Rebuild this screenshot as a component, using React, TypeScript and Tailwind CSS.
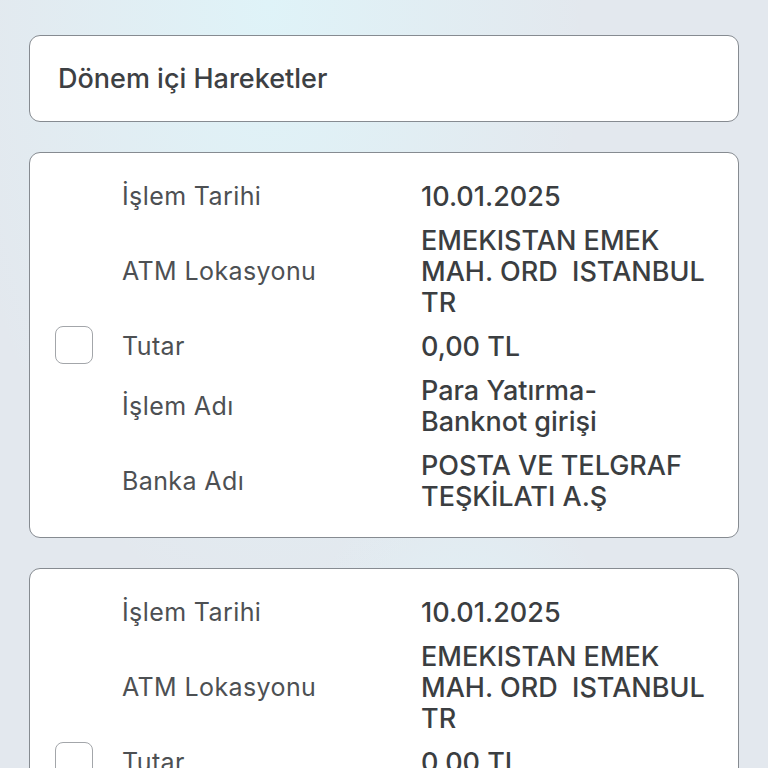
import React from "react";

interface Row {
  label: string;
  value: string[];
}

const rows: Row[] = [
  { label: "İşlem Tarihi", value: ["10.01.2025"] },
  { label: "ATM Lokasyonu", value: ["EMEKISTAN EMEK", "MAH. ORD  ISTANBUL", "TR"] },
  { label: "Tutar", value: ["0,00 TL"] },
  { label: "İşlem Adı", value: ["Para Yatırma-", "Banknot girişi"] },
  { label: "Banka Adı", value: ["POSTA VE TELGRAF", "TEŞKİLATI A.Ş"] },
];

function TxCard() {
  return (
    <div className="flex items-center rounded-[11px] border border-[#868b91] bg-white pl-[25px] pr-[16px]">
      <div className="h-[38px] w-[38px] shrink-0 rounded-[8px] border-[1.5px] border-[#a3a6aa] bg-white" />
      <div className="ml-[29px] flex flex-1 flex-col gap-[13px] pt-[28px] pb-[25px]">
        {rows.map((r) => (
          <div key={r.label} className="grid grid-cols-[299px_1fr] items-center">
            <span className="text-[25px] leading-[31px] tracking-[0.4px] text-[#4d5053]">{r.label}</span>
            <span className="whitespace-pre text-[27px] leading-[31px] font-medium text-[#3b3e41]">
              {r.value.map((line) => (
                <span key={line} className="block">
                  {line}
                </span>
              ))}
            </span>
          </div>
        ))}
      </div>
    </div>
  );
}

export default function App() {
  return (
    <div
      className="min-h-screen bg-[#e3e8ee] bg-[radial-gradient(ellipse_at_35%_0%,#dff3f8_0%,transparent_45%),radial-gradient(ellipse_at_60%_72%,#e0f3f8_0%,transparent_25%)] px-[29px] pt-[35px] pb-[30px]"
      style={{ fontFamily: "Inter, 'Open Sans', sans-serif" }}
    >
      <div className="flex flex-col gap-[30px]">
        <div className="flex h-[87px] items-center rounded-[11px] border border-[#868b91] bg-white pl-[28px] pt-[2px]">
          <h1 className="text-[27px] font-medium text-[#3d4043]">Dönem içi Hareketler</h1>
        </div>
        <TxCard />
        <TxCard />
      </div>
    </div>
  );
}
